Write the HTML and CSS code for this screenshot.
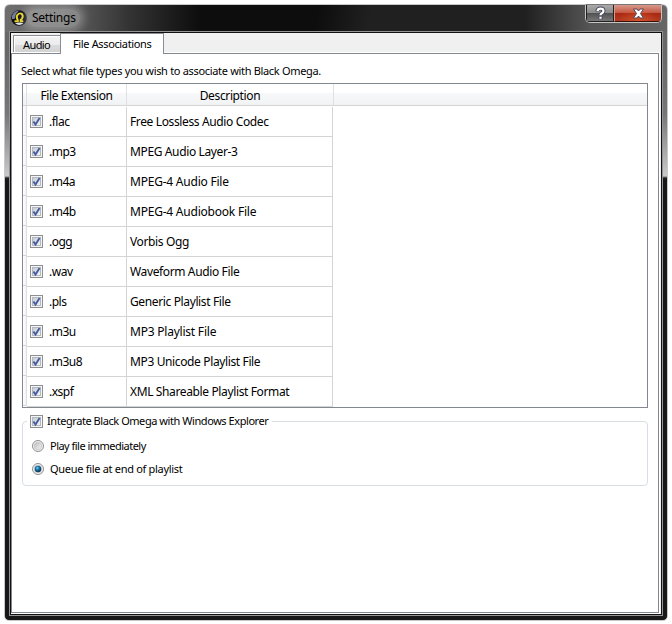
FILE: index.html
```html
<!DOCTYPE html>
<html lang="en">
<head>
<meta charset="utf-8">
<title>Settings</title>
<link rel="stylesheet" href="styles.css">
</head>
<body>
<svg width="0" height="0" class="defs">
  <defs>
    <linearGradient id="cb" x1="0" y1="0" x2="1" y2="1"><stop offset="0" stop-color="#c3c9d2"/><stop offset="1" stop-color="#f8f8f9"/></linearGradient>
    <linearGradient id="rb" x1="0" y1="0" x2="1" y2="1"><stop offset="0" stop-color="#bcbcbc"/><stop offset="1" stop-color="#f6f6f6"/></linearGradient>
    <radialGradient id="dot" cx=".4" cy=".35" r=".65"><stop offset="0" stop-color="#74d5f5"/><stop offset=".45" stop-color="#1673a8"/><stop offset="1" stop-color="#0b3153"/></radialGradient>
    <symbol id="check" viewBox="0 0 13 13">
      <rect x=".5" y=".5" width="12" height="12" fill="#f4f4f4" stroke="#8e8f8f"/>
      <rect x="2.5" y="2.5" width="8" height="8" fill="url(#cb)" stroke="#b3b9c2"/>
      <path d="M3.4 6.4L5.5 9.6L9.6 2.9" fill="none" stroke="#475c9c" stroke-width="1.9"/>
    </symbol>
    <symbol id="radio" viewBox="0 0 12 12">
      <circle cx="6" cy="6" r="5.5" fill="#f4f4f4" stroke="#8e8f8f"/>
      <circle cx="6" cy="6" r="3.8" fill="url(#rb)" stroke="#c0c0c0" stroke-width=".7"/>
    </symbol>
  </defs>
</svg>
<div class="window">
  <header class="titlebar">
    <svg class="logo" width="16" height="16" viewBox="0 0 16 16">
      <circle cx="8" cy="8" r="7.8" fill="#090b14"/>
      <path d="M2.500 3A7 7 0 0 1 8 .8L5 4 3.500 9 1 9A7 7 0 0 1 2.500 3Z" fill="#747d98"/>
      <path d="M4 13.500Q8 11.500 12.500 13.200Q8.500 16.500 4 13.500Z" fill="#dde1ea"/>
      <path d="M3.500 11.200H6.800V10Q4.800 7.500 6.500 4.800Q8.500 2.500 10.800 3.900Q12.600 6.200 11 8.600L9.600 10V11.200H12.300" fill="none" stroke="#e8d325" stroke-width="1.900"/>
    </svg>
    <span class="title">Settings</span>
    <div class="controls">
      <div class="help"><svg width="27" height="17" viewBox="0 0 27 17"><path d="M10.500 6.500V5.500Q11 3.500 13.500 3.500Q16.500 3.500 16.500 6Q16.500 7.400 14.500 8.500Q13.500 9 13.500 10.500M13.500 11.500V14" fill="none" stroke="#42475b" stroke-width="4"/><path d="M10.500 6.200Q10.800 3.700 13.500 3.700Q16.500 3.700 16.500 6Q16.500 7.400 14.500 8.400Q13.500 9 13.500 10.300M13.500 11.800V13.700" fill="none" stroke="#fff" stroke-width="2.200"/></svg></div>
      <div class="close"><svg width="46" height="17" viewBox="0 0 46 17"><path d="M18.500 4H22L23.500 6 25 4H28.500L25.500 8.500 28.500 13H25L23.500 11 22 13H18.500L21.500 8.500Z" fill="#fff" stroke="#53485a"/></svg></div>
    </div>
  </header>
  <main class="client">
    <nav class="tabs">
      <div class="tab"><span class="t-audio">Audio</span></div>
      <div class="tab active"><span class="t-file">File Associations</span></div>
    </nav>
    <section class="pane">
      <p class="intro">Select what file types you wish to associate with Black Omega.</p>
      <div class="table">
        <div class="head"><i></i><b class="h1">File Extension</b><b class="h2">Description</b></div>
        <div class="row"><i></i><div><svg><use href="#check"/></svg><span>.flac</span></div><p>Free Lossless Audio Codec</p></div>
        <div class="row"><i></i><div><svg><use href="#check"/></svg><span>.mp3</span></div><p>MPEG Audio Layer-3</p></div>
        <div class="row"><i></i><div><svg><use href="#check"/></svg><span>.m4a</span></div><p class="wide">MPEG-4 Audio File</p></div>
        <div class="row"><i></i><div><svg><use href="#check"/></svg><span>.m4b</span></div><p class="wide">MPEG-4 Audiobook File</p></div>
        <div class="row"><i></i><div><svg><use href="#check"/></svg><span>.ogg</span></div><p>Vorbis Ogg</p></div>
        <div class="row"><i></i><div><svg><use href="#check"/></svg><span>.wav</span></div><p>Waveform Audio File</p></div>
        <div class="row"><i></i><div><svg><use href="#check"/></svg><span>.pls</span></div><p>Generic Playlist File</p></div>
        <div class="row"><i></i><div><svg><use href="#check"/></svg><span>.m3u</span></div><p class="wide">MP3 Playlist File</p></div>
        <div class="row"><i></i><div><svg><use href="#check"/></svg><span>.m3u8</span></div><p>MP3 Unicode Playlist File</p></div>
        <div class="row"><i></i><div><svg><use href="#check"/></svg><span>.xspf</span></div><p>XML Shareable Playlist Format</p></div>
      </div>
      <fieldset class="group">
        <legend><svg width="13" height="13"><use href="#check"/></svg><span class="t-int">Integrate Black Omega with Windows Explorer</span></legend>
        <div class="option"><svg width="12" height="12"><use href="#radio"/></svg><span class="t-play">Play file immediately</span></div>
        <div class="option"><svg width="12" height="12" viewBox="0 0 12 12"><use href="#radio"/><circle cx="6" cy="6" r="3.200" fill="url(#dot)"/></svg><span class="t-queue">Queue file at end of playlist</span></div>
      </fieldset>
    </section>
  </main>
</div>
</body>
</html>
```
FILE: styles.css
```css
* { box-sizing: border-box; }
body { margin: 0; background: #fff; font: 12px/16px "Noto Sans", "Open Sans", sans-serif; color: #000; overflow: hidden; }
p { margin: 0; }
span, p, b { white-space: nowrap; }
svg { display: block; flex: none; }
.defs { position: absolute; }
.window {
  width: 664px; height: 617px; margin: 4px; padding: 0 4px 4px;
  border: 1px solid #c8c8c8; border-radius: 6px 6px 5px 5px;
  background:
    linear-gradient(90deg, #6e6e6e 0, #626262 60px, rgba(60,60,60,.8) 125px, rgba(14,14,14,0) 195px) 0 0 / 100% 27px no-repeat,
    linear-gradient(90deg, rgba(85,85,85,0) 520px, #555 585px, #666 100%) 0 0 / 100% 27px no-repeat,
    linear-gradient(100deg, #0d0d0d 0, #0d0d0d 47%, #202020 55%, #202020 100%) 0 0 / 100% 27px no-repeat,
    linear-gradient(#686868 0, #686868 50px, #777 110px, #c9c9c9 171px, #222 173px, #171717 175px, #171717 100%);
}
.titlebar { display: flex; height: 26px; padding-left: 2px; }
.logo { margin-top: 5px; }
.title { margin: 4px 0 0 0; padding: 0 4px 0 5px; height: 18px; line-height: 18px; letter-spacing: -.25px; border-radius: 9px; background: rgba(255,255,255,.27); box-shadow: 0 0 8px 4px rgba(255,255,255,.27); }
.controls { display: flex; height: 19px; margin: -1px 1px 0 auto; border: 1px solid #c4c4c4; border-top-color: #777; border-radius: 0 0 5px 5px; overflow: hidden; }
.help { width: 28px; border: 1px solid #222; border-width: 0 1px 1px; background: linear-gradient(#aaa, #8c8c8c 47%, #505050 50%, #777); }
.close { width: 47px; border-bottom: 1px solid #35100b; border-left: 1px solid #d79a8e; background: radial-gradient(ellipse at 50% 100%, rgba(240,100,50,.55), transparent 60%), linear-gradient(#d9998b, #c45a45 47%, #a82712 50%, #b13c22); }
.client { height: 585px; border: 1px solid #949494; outline: 1px solid #111; outline-offset: -2px; padding: 1px; background: #f0f0f0; }
.tabs { display: flex; align-items: flex-end; height: 21px; padding-left: 2px; }
.tab { width: 48px; height: 18px; margin-bottom: 1px; border: 1px solid #898c95; border-bottom: 0; padding-left: 9px; background: linear-gradient(#f3f3f3, #ebebeb 50%, #dcdcdc 51%, #d2d2d2); box-shadow: inset 1px 1px #fff; font-size: 11px; line-height: 18px; letter-spacing: -.36px; }
.tab.active { width: 104px; height: 21px; margin: 0 0 0 -1px; padding-left: 12px; background: #fff; position: relative; line-height: 20px; }
.t-audio { letter-spacing: -.6px; }
.pane { height: 560px; margin-right: 2px; padding: 9px 10px 0; border: 1px solid #828790; background: #fff; margin-top: -1px; outline: 1px solid #fff; }
.intro { height: 20px; line-height: 16px; font-size: 11px; letter-spacing: -.32px; margin-left: -1px; }
.table { width: 626px; height: 325px; border: 1px solid #828790; letter-spacing: -.37px; }
.head { display: flex; height: 22px; border-bottom: 1px solid #d5d5d5; background: linear-gradient(#fff 43%, #f7f8fa 44%, #f1f2f4); }
.head i, .row i { width: 4px; flex: none; border-right: 1px solid #dfdfe1; }
.head b { font-weight: 400; text-align: center; line-height: 24px; border-right: 1px solid #dfe0e2; }
.h1 { width: 100px; }
.h2 { width: 207px; }
.row { display: flex; height: 30px; }
.row i { background: linear-gradient(90deg, #fff, #f2f3f6); border-bottom: 1px solid #d5d5d5; height: 30px; }
.row div, .row p { height: 30px; margin-top: 1px; padding-left: 3px; border: solid #d4d4d4; border-width: 0 1px 1px 0; }
.row div { display: flex; align-items: center; width: 100px; }
.row svg { width: 13px; height: 13px; margin-right: 6px; }
.row p { width: 206px; line-height: 30px; }
.row div { letter-spacing: -.5px; }
.row .wide { letter-spacing: -.22px; }
.group { width: 626px; height: 73px; margin: 5px 0 0; border: 1px solid #d5dfe5; border-radius: 4px; padding: 5px 9px 0; font-size: 11px; }
legend { display: flex; align-items: center; height: 16px; padding: 0 4px 0 3px; margin-left: -5px; gap: 4px; }
.option { display: flex; align-items: center; height: 23px; gap: 6px; }
.t-int { letter-spacing: -.44px; }
.t-play { letter-spacing: -.52px; }
.t-queue { letter-spacing: -.3px; }
```
